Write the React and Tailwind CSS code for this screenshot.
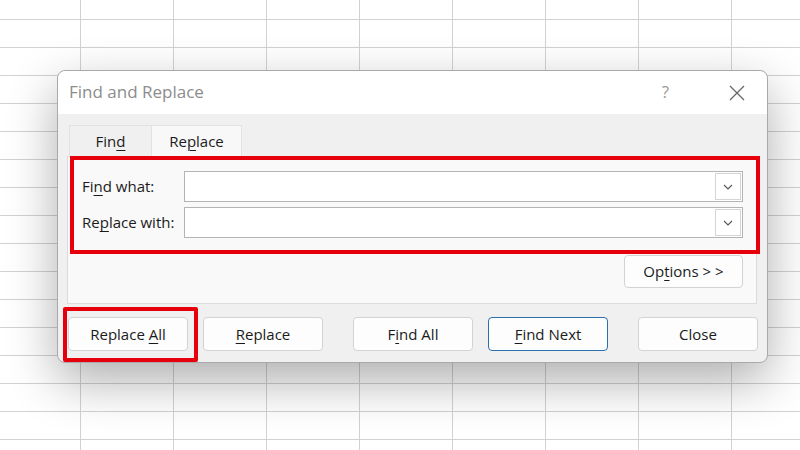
import React from 'react';

const font = { fontFamily: '"Open Sans", "Noto Sans", "Liberation Sans", sans-serif' };

function Key({ children }) {
    return <span className="underline underline-offset-[3px] decoration-1">{children}</span>;
}

function Combo() {
    return (
        <div className="flex-1 h-[31px] bg-white border border-[#b4b4b4] flex items-center justify-end pr-[1px]">
            <div className="w-[26px] h-[27px] border border-[#d4d4d4] bg-white flex items-center justify-center">
                <svg width="10" height="6" viewBox="0 0 10 6" fill="none">
                    <path d="M1 1l4 4 4-4" stroke="#555" strokeWidth="1.1" />
                </svg>
            </div>
        </div>
    );
}

function Btn({ children, primary = false }) {
    return (
        <button
            className={
                'w-[120px] h-[34px] rounded-[4px] bg-[#fdfdfd] text-[15px] text-[#1b1b1b] border ' +
                (primary ? 'border-[#2a6fb0]' : 'border-[#d3d3d3]')
            }
        >
            {children}
        </button>
    );
}

export default function App() {
    return (
        <div
            style={font}
            className="w-[800px] h-[450px] overflow-hidden bg-white bg-[linear-gradient(to_right,#d2d2d2_1px,transparent_1px),linear-gradient(to_bottom,#d2d2d2_1px,transparent_1px)] bg-[size:93px_28px] bg-[position:80px_19px] pt-[70px] pl-[57px]"
        >
            {/* Dialog */}
            <div className="w-[711px] h-[293px] rounded-[8px] border border-[#a9a9a9] bg-[#f0f0f0] shadow-[0_18px_50px_rgba(0,0,0,0.32)] flex flex-col">
                {/* Title bar */}
                <div className="h-[43px] bg-white rounded-t-[8px] flex items-center pl-[11px] pr-[22px] shrink-0">
                    <span className="text-[17px] text-[#8c8c8c] -mt-[2px]">Find and Replace</span>
                    <span className="ml-auto text-[17px] text-[#9a9a9a] mr-[60px] -mt-[2px]">?</span>
                    <svg width="16" height="16" viewBox="0 0 16 16" fill="none">
                        <path d="M1 1l14 14M15 1L1 15" stroke="#666" strokeWidth="1.3" />
                    </svg>
                </div>

                {/* Tabs */}
                <div className="flex pl-[11px] pt-[11px] shrink-0">
                    <div className="w-[83px] h-[31px] bg-[#f0f0f0] border-t border-x border-[#e2e2e2] flex items-center justify-center text-[15px] text-[#1b1b1b]">
                        Fin<Key>d</Key>
                    </div>
                    <div className="w-[90px] h-[31px] bg-[#f8f8f8] border-t border-r border-[#e2e2e2] flex items-center justify-center text-[15px] text-[#1b1b1b]">
                        Re<Key>p</Key>lace
                    </div>
                </div>

                {/* Tab panel */}
                <div className="ml-[9px] w-[690px] h-[148px] bg-[#f9f9f9] border border-[#dcdcdc] shrink-0">
                    <div className="-mt-px ml-[2px] -mr-[4px] h-[98px] border-4 border-[#e5000c] pl-[8px] pr-[13px] pt-[11px] flex flex-col gap-[5px] text-[15px] text-[#1b1b1b]">
                        <div className="flex items-center">
                            <span className="w-[102px]">Fi<Key>n</Key>d what:</span>
                            <Combo />
                        </div>
                        <div className="flex items-center">
                            <span className="w-[102px]">Re<Key>p</Key>lace with:</span>
                            <Combo />
                        </div>
                    </div>
                    <div className="flex justify-end pr-[13px] mt-[1px]">
                        <button className="w-[119px] h-[33px] rounded-[4px] bg-[#fdfdfd] border border-[#d3d3d3] text-[15px] text-[#1b1b1b]">
                            Op<Key>t</Key>ions &gt; &gt;
                        </button>
                    </div>
                </div>

                {/* Buttons */}
                <div className="flex items-center pl-[10px] mt-[13px]">
                    <div className="relative">
                        <Btn>Replace <Key>A</Key>ll</Btn>
                        <span className="absolute left-[-5px] right-[-10px] top-[-10px] bottom-[-11px] border-4 border-[#e5000c] rounded-[2px]" />
                    </div>
                    <div className="ml-[15px]">
                        <Btn><Key>R</Key>eplace</Btn>
                    </div>
                    <div className="ml-[30px]">
                        <Btn>F<Key>i</Key>nd All</Btn>
                    </div>
                    <div className="ml-[15px]">
                        <Btn primary><Key>F</Key>ind Next</Btn>
                    </div>
                    <div className="ml-[30px]">
                        <Btn>Close</Btn>
                    </div>
                </div>
            </div>
        </div>
    );
}
